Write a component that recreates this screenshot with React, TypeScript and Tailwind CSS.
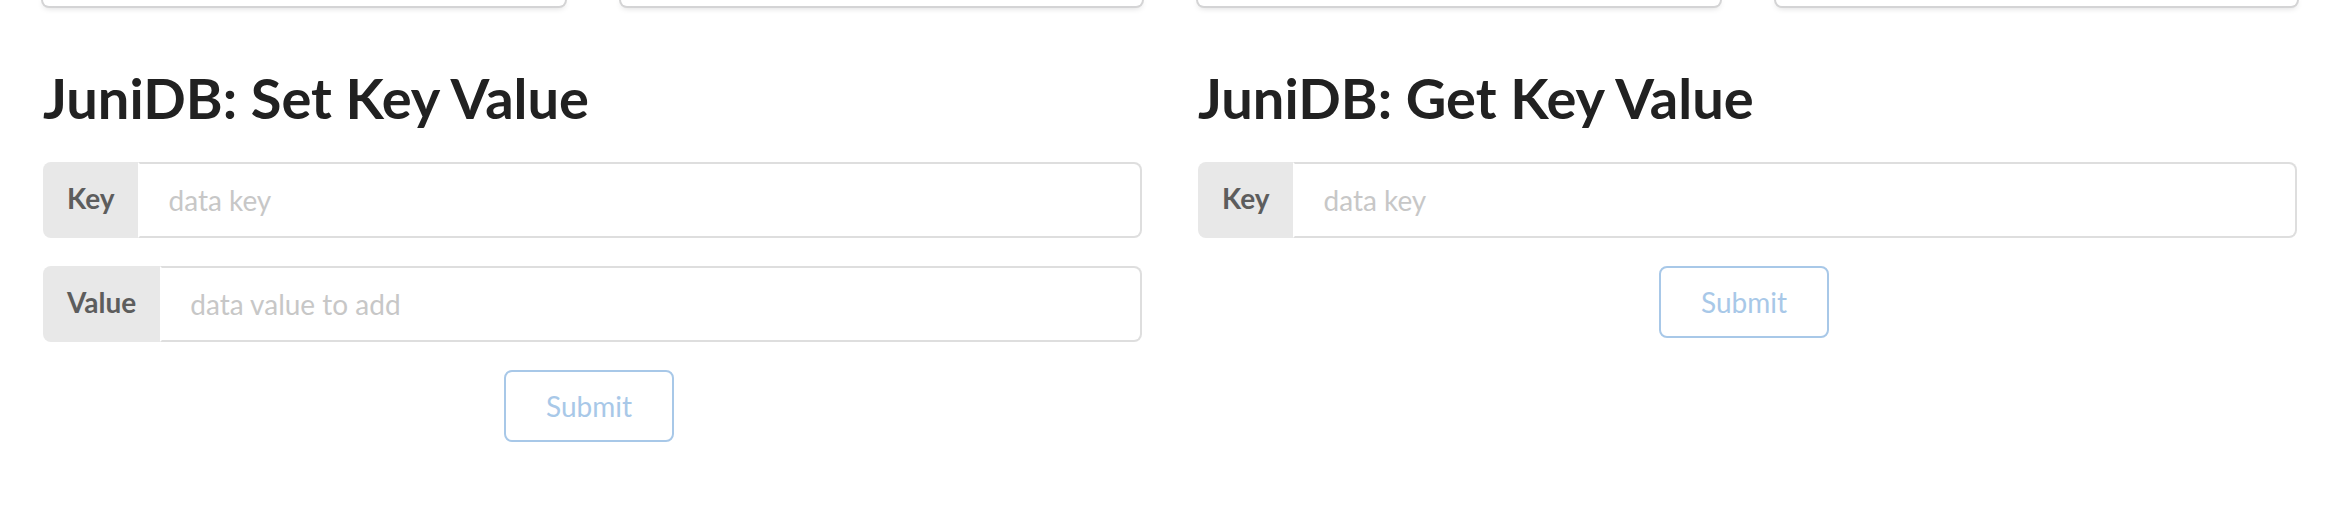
import { useId } from "react";

function Field({ label, placeholder }: { label: string; placeholder: string }) {
  const id = useId();
  return (
    <div className="flex w-full">
      <label
        htmlFor={id}
        className="flex-none rounded-l-lg bg-[#e8e8e8] px-6 pt-[22px] pb-[26px] text-[28px] leading-7 font-bold text-[#5d5d5d]"
      >
        {label}
      </label>
      <input
        id={id}
        type="text"
        placeholder={placeholder}
        className="min-w-0 flex-1 rounded-r-lg border-2 border-[#dedede] border-l-transparent bg-white px-7 py-[19px] text-[28px] leading-[34px] text-[#212121] outline-none placeholder:text-[#c7c7c7]"
      />
    </div>
  );
}

type FieldData = { label: string; placeholder: string };

function KeyForm({ title, fields }: { title: string; fields: FieldData[] }) {
  return (
    <section>
      <h1 className="mb-7 text-[56px] leading-[72px] font-bold text-[#212121]">{title}</h1>
      <form className="flex flex-col items-center gap-7" onSubmit={(e) => e.preventDefault()}>
        {fields.map((f) => (
          <Field key={f.label} label={f.label} placeholder={f.placeholder} />
        ))}
        <button
          type="submit"
          disabled
          className="mr-[7px] rounded-lg border-2 border-[#a8c8e8] px-10 py-5 text-[28px] leading-7 text-[#a8c8e8]"
        >
          Submit
        </button>
      </form>
    </section>
  );
}

const keyField = { label: "Key", placeholder: "data key" };
const valueField = { label: "Value", placeholder: "data value to add" };

export default function App() {
  return (
    <main className="bg-white pr-[45px] pl-[43px] font-[Lato,sans-serif]">
      <div className="grid grid-cols-4 gap-14">
        {[0, 1, 2, 3].map((n) => (
          <div
            key={n}
            className="h-1.5 rounded-b-lg bg-white shadow-[0_2px_6px_0_#d4d4d5,0_0_0_2px_#d4d4d5]"
          />
        ))}
      </div>
      <div className="mt-14 grid grid-cols-2 gap-14">
        <KeyForm title="JuniDB: Set Key Value" fields={[keyField, valueField]} />
        <KeyForm title="JuniDB: Get Key Value" fields={[keyField]} />
      </div>
    </main>
  );
}
